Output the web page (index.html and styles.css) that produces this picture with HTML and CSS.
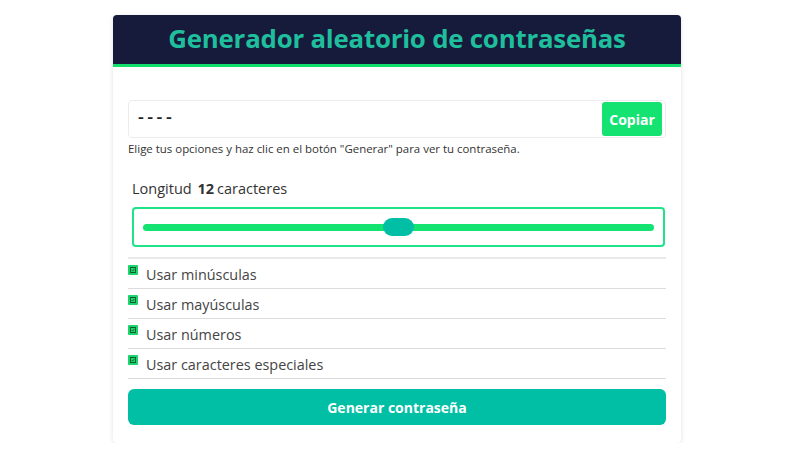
FILE: index.html
```html
<!DOCTYPE html>
<html lang="es">
<head>
<meta charset="utf-8">
<title>Generador aleatorio de contraseñas</title>
<link rel="stylesheet" href="styles.css">
</head>
<body>
<div class="card">
  <header class="card-header">
    <h1 class="title">Generador aleatorio de contraseñas</h1>
  </header>
  <div class="card-body">
    <div class="output-row">
      <span class="output-text">----</span>
      <button class="copy-btn">Copiar</button>
    </div>
    <p class="hint">Elige tus opciones y haz clic en el botón "Generar" para ver tu contraseña.</p>
    <div class="length-label">Longitud <b class="length-value">12</b>caracteres</div>
    <div class="slider-box">
      <input class="slider" type="range" min="4" max="20" value="12">
    </div>
    <ul class="options">
      <li class="option"><svg class="check" viewBox="0 0 10 10"><rect width="10" height="10" rx="1" fill="#1bd46b"/><rect x="2.5" y="2.5" width="5" height="5" fill="none" stroke="#0b5e32" stroke-width="1"/><path d="M3.6 5 L4.6 6 L6.4 4" fill="none" stroke="#0b5e32" stroke-width="0.9"/></svg><span class="option-text">Usar minúsculas</span></li>
      <li class="option"><svg class="check" viewBox="0 0 10 10"><rect width="10" height="10" rx="1" fill="#1bd46b"/><rect x="2.5" y="2.5" width="5" height="5" fill="none" stroke="#0b5e32" stroke-width="1"/><path d="M3.6 5 L4.6 6 L6.4 4" fill="none" stroke="#0b5e32" stroke-width="0.9"/></svg><span class="option-text">Usar mayúsculas</span></li>
      <li class="option"><svg class="check" viewBox="0 0 10 10"><rect width="10" height="10" rx="1" fill="#1bd46b"/><rect x="2.5" y="2.5" width="5" height="5" fill="none" stroke="#0b5e32" stroke-width="1"/><path d="M3.6 5 L4.6 6 L6.4 4" fill="none" stroke="#0b5e32" stroke-width="0.9"/></svg><span class="option-text">Usar números</span></li>
      <li class="option"><svg class="check" viewBox="0 0 10 10"><rect width="10" height="10" rx="1" fill="#1bd46b"/><rect x="2.5" y="2.5" width="5" height="5" fill="none" stroke="#0b5e32" stroke-width="1"/><path d="M3.6 5 L4.6 6 L6.4 4" fill="none" stroke="#0b5e32" stroke-width="0.9"/></svg><span class="option-text">Usar caracteres especiales</span></li>
    </ul>
    <button class="generate-btn">Generar contraseña</button>
  </div>
</div>
</body>
</html>
```
FILE: styles.css
```css
* { box-sizing: border-box; }
body {
  margin: 0;
  background: #ffffff;
  font-family: "Open Sans", "Noto Sans", sans-serif;
  color: #333;
}
.card {
  width: 568px;
  margin: 15px 0 0 113px;
  border-radius: 4px;
  background: #fff;
  box-shadow: 0 1px 5px rgba(0,0,0,0.12);
  overflow: hidden;
}
.card-header {
  height: 52px;
  background: #171b3b;
  border-bottom: 3px solid #12e06c;
  display: flex;
  align-items: center;
  justify-content: center;
}
.title {
  margin: 0;
  font-size: 25.8px;
  font-weight: 700;
  color: #1fbf9e;
  letter-spacing: -0.2px;
  line-height: 1;
  padding-bottom: 1px;
}
.card-body {
  padding: 33px 15px 18px 15px;
}
.output-row {
  display: flex;
  align-items: center;
  height: 38px;
  border: 1px solid #ececec;
  border-radius: 4px;
  padding: 0 3px 0 9px;
}
.output-text {
  flex: 1;
  font-size: 18px;
  font-weight: 600;
  color: #222;
  letter-spacing: 3.5px;
  padding-bottom: 6px;
}
.copy-btn {
  width: 60px;
  height: 34px;
  border: none;
  border-radius: 3px;
  background: #14e372;
  color: #fff;
  font-family: inherit;
  font-weight: 700;
  font-size: 14px;
  padding: 0;
}
.hint {
  margin: 3px 0 0 0;
  font-size: 11.45px;
  color: #333;
}
.length-label {
  margin: 23px 0 0 4px;
  font-size: 14.5px;
  color: #333;
}
.length-value {
  font-weight: 700;
  margin: 0 3px 0 2px;
}
.slider-box {
  margin: 9px 1px 0 4px;
  height: 40px;
  border: 2px solid #1fe388;
  border-radius: 4px;
  display: flex;
  align-items: center;
  padding: 0 9px;
}
.slider {
  -webkit-appearance: none;
  appearance: none;
  width: 100%;
  height: 18px;
  margin: 0;
  background: transparent;
}
.slider::-webkit-slider-runnable-track {
  height: 7px;
  border-radius: 4px;
  background: #14e372;
}
.slider::-webkit-slider-thumb {
  -webkit-appearance: none;
  appearance: none;
  width: 31px;
  height: 18px;
  margin-top: -5.5px;
  border-radius: 9px;
  background: #00bfa5;
  border: none;
}
.options {
  list-style: none;
  margin: 10px 0 0 0;
  padding: 0;
  border-top: 2px solid #e9e9e9;
}
.option {
  height: 30px;
  border-bottom: 1px solid #dcdcdc;
  display: flex;
  align-items: flex-start;
}
.check {
  width: 10px;
  height: 10px;
  margin-top: 6px;
  flex: none;
}
.option-text {
  margin-left: 8px;
  font-size: 14.4px;
  color: #444;
  line-height: 32px;
}
.generate-btn {
  display: block;
  width: 100%;
  height: 36px;
  margin-top: 10px;
  border: none;
  border-radius: 6px;
  background: #00bfa5;
  color: #fff;
  font-family: inherit;
  font-weight: 700;
  font-size: 14px;
}
```
